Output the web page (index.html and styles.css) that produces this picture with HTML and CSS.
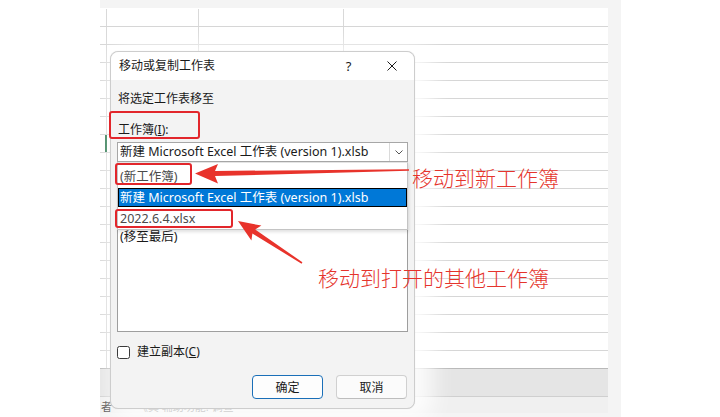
FILE: index.html
```html
<!DOCTYPE html>
<html lang="zh-CN">
<head>
<meta charset="utf-8">
<title>移动或复制工作表</title>
<link rel="stylesheet" href="styles.css">
</head>
<body>
<div class="shot">
  <div class="sheet">
    <div class="grid">
      <div class="row"><i></i><i></i><i></i><i></i></div>
      <div class="row"><i></i><i></i><i></i><i></i></div>
      <div class="row"><i></i><i></i><i></i><i></i></div>
      <div class="row"><i></i><i></i><i></i><i></i></div>
      <div class="row"><i></i><i></i><i></i><i></i></div>
      <div class="row"><i></i><i></i><i></i><i></i></div>
      <div class="row"><i></i><i></i><i></i><i></i></div>
      <div class="row"><i class="active"></i><i></i><i></i><i></i></div>
      <div class="row"><i></i><i></i><i></i><i></i></div>
      <div class="row"><i></i><i></i><i></i><i></i></div>
      <div class="row"><i></i><i></i><i></i><i></i></div>
      <div class="row"><i></i><i></i><i></i><i></i></div>
      <div class="row"><i></i><i></i><i></i><i></i></div>
      <div class="row"><i></i><i></i><i></i><i></i></div>
      <div class="row"><i></i><i></i><i></i><i></i></div>
      <div class="row"><i></i><i></i><i></i><i></i></div>
      <div class="row"><i></i><i></i><i></i><i></i></div>
      <div class="row"><i></i><i></i><i></i><i></i></div>
      <div class="row"><i></i><i></i><i></i><i></i></div>
      <div class="row"><i></i><i></i><i></i><i></i></div>
    </div>
    <div class="tabs"></div>
    <div class="status"><span class="status-cut">者</span><span class="status-text">《其 辅助功能: 调查</span></div>
  </div>

  <div class="dialog">
    <div class="titlebar">
      <span class="title">移动或复制工作表</span>
      <span class="help">?</span>
      <span class="close">
        <svg width="10" height="10" viewBox="0 0 10 10"><path d="M0.5 0.5 L9.5 9.5 M9.5 0.5 L0.5 9.5" stroke="#1a1a1a" stroke-width="1" fill="none"/></svg>
      </span>
    </div>
    <div class="body">
      <div class="label first">将选定工作表移至</div>
      <div class="label second">工作簿(<u>I</u>):</div>
      <div class="combo-wrap">
        <div class="combo">
          <span class="combo-text">新建 Microsoft Excel 工作表 (version 1).xlsb</span>
          <span class="combo-btn">
            <svg width="8" height="5" viewBox="0 0 8 5"><path d="M0.5 0.5 L4 4 L7.5 0.5" stroke="#555" stroke-width="1" fill="none"/></svg>
          </span>
        </div>
        <div class="dropdown">
          <div class="opt muted">(新工作簿)</div>
          <div class="opt selected">新建 Microsoft Excel 工作表 (version 1).xlsb</div>
          <div class="opt muted">2022.6.4.xlsx</div>
        </div>
      </div>
      <div class="label third"></div>
      <div class="listbox">
        <div class="item"></div>
        <div class="item"></div>
        <div class="item">(移至最后)</div>
      </div>
      <label class="check-row">
        <span class="checkbox"></span>
        <span>建立副本(<u>C</u>)</span>
      </label>
      <div class="buttons">
        <span class="btn primary">确定</span>
        <span class="btn">取消</span>
      </div>
    </div>
  </div>
</div>

<div class="marks">
  <span class="mark mark-book"></span>
  <span class="mark mark-new"></span>
  <span class="mark mark-open"></span>
  <span class="note note-new">移动到新工作簿</span>
  <span class="note note-open">移动到打开的其他工作簿</span>
  <svg class="arrows" width="720" height="417" viewBox="0 0 720 417">
    <polygon points="195,173.5 218,164 215,171 409,169.2 409,170.8 215,176 218,183.5" fill="#e8332b"/>
    <polygon points="238,221 261.4,225.6 255.2,229.4 302.4,262.3 301.6,263.7 252.4,233.6 251.4,240.6" fill="#e8332b"/>
  </svg>
</div>
</body>
</html>
```

FILE: styles.css
```css
* {
  box-sizing: border-box;
}

html, body {
  margin: 0;
  padding: 0;
  width: 720px;
  height: 417px;
  overflow: hidden;
  background: #ffffff;
  font-family: "Noto Sans", "Noto Sans CJK SC", sans-serif;
  font-size: 12px;
  color: #1a1a1a;
}

u {
  text-decoration: underline;
  text-underline-offset: 1px;
}

/* framed window capture */
.shot {
  position: relative;
  margin-left: 100px;
  width: 521px;
  height: 417px;
  padding: 8px 13px 4px 0;
  background: #f4f4f4;
}

.sheet {
  height: 405px;
  background: #ffffff;
  display: flex;
  flex-direction: column;
}

.grid {
  padding-top: 1px;
}

.row {
  display: grid;
  grid-template-columns: 7px 92px 145px 1fr;
  height: 18px;
  border-bottom: 1px solid #d6d6d6;
}

.row:last-child {
  border-bottom-color: #b9b9b9;
}

.row i {
  display: block;
  border-right: 1px solid #d9d9d9;
}

.row i:last-child {
  border-right: none;
}

.row i.active {
  border-right: 2px solid #217346;
}

.tabs {
  height: 28px;
  background: #e5e5e5;
  border-bottom: 1px solid #cfcfcf;
}

.status {
  height: 16px;
  background: #f0f0f0;
  display: flex;
  align-items: center;
  font-size: 11px;
  color: #444;
  line-height: 16px;
  padding-top: 3px;
}

.status-cut {
  margin-left: 1px;
}

.status-text {
  margin-left: 25px;
  color: #666;
}

/* dialog window */
.dialog {
  position: absolute;
  left: 10px;
  top: 51px;
  width: 305px;
  height: 358px;
  border: 1px solid #cdcdcd;
  border-radius: 8px;
  background: #f3f3f3;
  box-shadow: 0 0 1px rgba(0, 0, 0, 0.15), 10px 4px 22px 8px rgba(255, 255, 255, 0.85);
}

.titlebar {
  height: 28px;
  display: flex;
  align-items: center;
  background: #ffffff;
  border-radius: 8px 8px 0 0;
  padding-left: 8px;
}

.title {
  font-size: 12px;
  line-height: 16px;
}

.help {
  margin-left: auto;
  width: 40px;
  text-align: center;
  font-size: 13px;
  line-height: 16px;
  padding-right: 1px;
}

.close {
  width: 46px;
  height: 28px;
  display: flex;
  align-items: center;
  justify-content: center;
  margin-right: -1px;
}

.close svg {
  display: block;
}

.body {
  padding: 0 6px 9px 6px;
  display: flex;
  flex-direction: column;
}

.label {
  line-height: 16px;
  height: 16px;
  padding-left: 1px;
}

.label.first {
  margin-top: 11px;
}

.label.second {
  margin-top: 15px;
}

.label.third {
  margin-top: 6px;
}

.combo-wrap {
  position: relative;
  margin-top: 4px;
}

.combo {
  height: 20px;
  background: #ffffff;
  border: 1px solid #a7a7a7;
  display: flex;
  align-items: center;
}

.combo-text {
  flex: 1;
  padding-left: 2px;
  font-size: 12.5px;
  line-height: 18px;
  white-space: nowrap;
  overflow: hidden;
}

.combo-btn {
  width: 18px;
  height: 18px;
  border-left: 1px solid #dadada;
  display: flex;
  align-items: center;
  justify-content: center;
}

.combo-btn svg {
  display: block;
}

/* open dropdown list of the combo */
.dropdown {
  position: absolute;
  left: 0;
  right: 0;
  top: 100%;
  z-index: 2;
  background: #ffffff;
  border: 1px solid #c4c4c4;
  border-top: 1px solid #e4e4e4;
  padding-top: 3px;
  box-shadow: 1px 2px 3px rgba(0, 0, 0, 0.12);
}

.opt {
  height: 21px;
  line-height: 21px;
  padding-left: 2px;
  font-size: 12.5px;
  white-space: nowrap;
}

.opt.muted {
  color: #4a4a4a;
}

.opt.selected {
  height: 19px;
  line-height: 17px;
  margin: 1px 0;
  padding-left: 1px;
  background: #0078d7;
  border: 1px solid #000000;
  color: #ffffff;
}

.listbox {
  margin-top: 2px;
  height: 146px;
  background: #ffffff;
  border: 1px solid #9e9e9e;
}

.item {
  height: 20px;
  line-height: 20px;
  padding-left: 2px;
  font-size: 12.5px;
}

.check-row {
  margin-top: 12px;
  height: 16px;
  display: flex;
  align-items: center;
  gap: 7px;
  line-height: 16px;
}

.checkbox {
  width: 13px;
  height: 13px;
  border: 1px solid #3a3a3a;
  border-radius: 2.5px;
  background: #ffffff;
}

.buttons {
  margin-top: 15px;
  display: flex;
  justify-content: flex-end;
  gap: 13px;
  padding-right: 1px;
}

.btn {
  width: 71px;
  height: 24px;
  display: flex;
  align-items: center;
  justify-content: center;
  border: 1px solid #d0d0d0;
  border-bottom-color: #bdbdbd;
  border-radius: 4px;
  background: #fbfbfb;
}

.btn.primary {
  border: 1px solid #1a6fb8;
  border-bottom-width: 1.5px;
  background: #fdfdfd;
}

/* red annotations drawn over the screenshot */
.marks {
  position: absolute;
  left: 0;
  top: 0;
  z-index: 5;
  width: 720px;
  height: 417px;
  pointer-events: none;
}

.mark {
  position: absolute;
  border: 2.5px solid #e2262b;
  border-radius: 3px;
}

.mark-book {
  left: 109px;
  top: 111px;
  width: 91px;
  height: 28px;
}

.mark-new {
  left: 115px;
  top: 163px;
  width: 77px;
  height: 22px;
}

.mark-open {
  left: 115px;
  top: 209px;
  width: 118px;
  height: 19px;
}

.note {
  position: absolute;
  font-family: "Noto Sans CJK SC", sans-serif;
  font-weight: 300;
  font-size: 21px;
  line-height: 24px;
  color: #e5342c;
  white-space: nowrap;
}

.note-new {
  left: 412px;
  top: 165px;
}

.note-open {
  left: 318px;
  top: 265px;
}

.arrows {
  position: absolute;
  left: 0;
  top: 0;
}
```
